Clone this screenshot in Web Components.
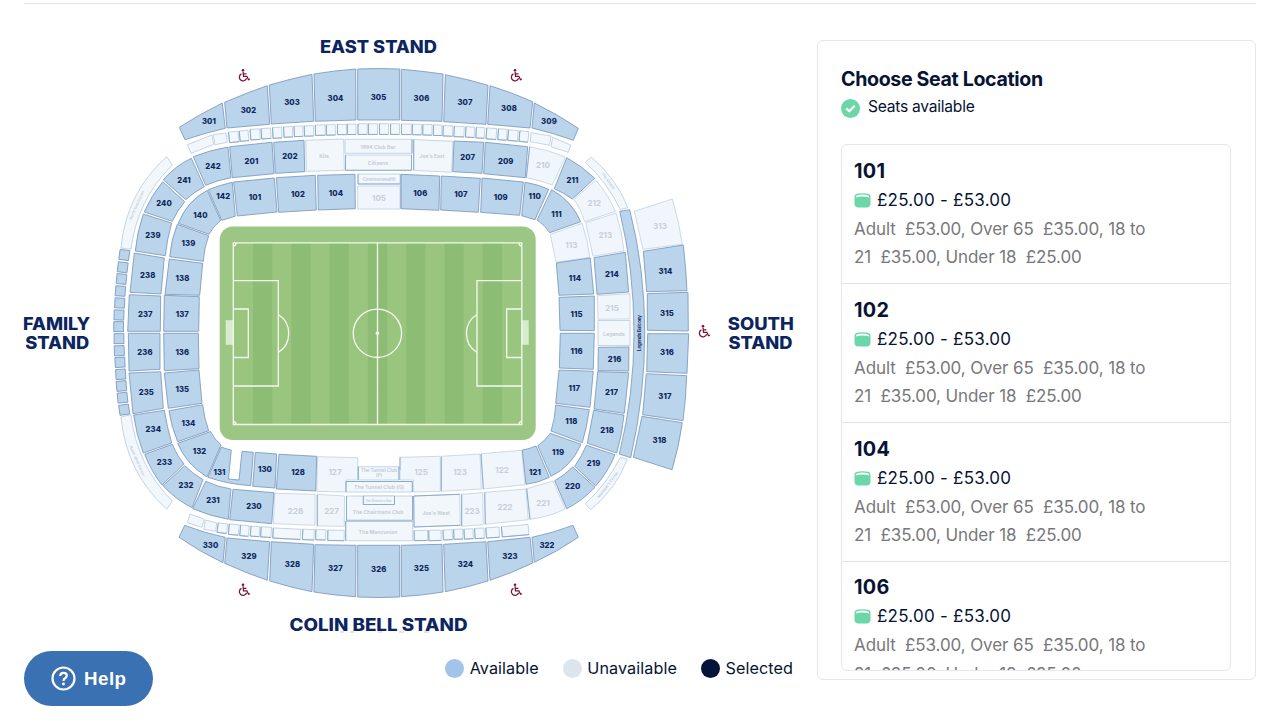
<!DOCTYPE html>
<html lang="en">
<head>
<meta charset="utf-8">
<title>Choose Seat Location</title>
<style>
  body {
    margin: 0;
    background: #fff;
    font-family: Inter, 'Liberation Sans', sans-serif;
    color: #061333;
    overflow: hidden;
  }
</style>
</head>
<body>
<seat-page>
  <stadium-map slot="map"></stadium-map>
  <map-legend slot="map"></map-legend>
  <seat-panel slot="panel" heading="Choose Seat Location" status="Seats available">
    <seat-item block="101"></seat-item>
    <seat-item block="102"></seat-item>
    <seat-item block="104"></seat-item>
    <seat-item block="106"></seat-item>
  </seat-panel>
</seat-page>
<help-button>Help</help-button>

<script>
// label, label x, label y, outline
const AVAILABLE = [
  // level 3, east
  ['301', 209, 121, '179.3 127.3Q200 114 222.3 103L225.3 128.3Q205 133 185 139.7'],
  ['302', 248.5, 110, '224.7 102.3Q246 93 267.3 85.7L269.7 124.3L227 128'],
  ['303', 292, 102, '269.3 85Q290 79 312 74.3L313.7 121.3L271.3 124'],
  ['304', 335.5, 98.7, '314 74Q335 70.5 355.7 69L356 120L315.3 121.3'],
  ['305', 378.5, 97, '357.7 69Q378.5 68 399.7 69L399.7 120L357.7 120'],
  ['306', 421.5, 98.7, '401.3 69.3Q422 71 443 74L442 121.3L401.3 120.3'],
  ['307', 465, 102.3, '445.3 74.7Q467 79 488 85.3L486 124.3L443.7 121.7'],
  ['308', 509, 108.7, '490 85.7Q512 92.5 532.7 101.7L530 128L487.7 124.3'],
  ['309', 549, 121, '534.3 103Q557 114 578.3 128.3L573.3 140.3Q553 133 532 128'],
  // level 3, colin bell
  ['330', 210.5, 545.3, '184.7 525.3Q204 533 225.3 537.3L223 562.7Q200 552 179 537.3'],
  ['329', 249, 556.7, '227 538L269.7 541.7L267.3 580.3Q246 573 224.7 563.3'],
  ['328', 292.5, 564.3, '271.3 541.7L313.7 544.3L312 591.7Q291 587.5 269.7 581'],
  ['327', 335.5, 568.5, '315 544.7L356 545.3L355.7 596.7Q335 595.5 314 592'],
  ['326', 378.7, 569.5, '357.7 545.3L399.7 545.3L399.7 597Q378.5 598 357.7 597'],
  ['325', 421.5, 568.5, '401.3 545.3L442 544.3L443 592Q422 595.5 401.3 596.7'],
  ['324', 465.5, 564.3, '443.7 544.3L486 541.7L488 581Q467 587.5 445.3 591.7'],
  ['323', 510, 556.7, '487.7 541.7L530 537.3L532.7 563Q512 573 490 580.3'],
  ['322', 547, 545, '532 537.3Q553 533 573 525.3L578.3 537.3Q557 552 534.3 562.3'],
  // level 3, south
  ['314', 665.5, 271, '643.3 251.3L683.3 245Q686 268 687 290.7L646.7 291.7'],
  ['315', 667, 313, '647.3 293.7L688 292.3L688.3 331L647.3 330.3'],
  ['316', 667, 352.7, '647.7 333.7L688.7 333.7L687 373.3L646.7 371.7'],
  ['317', 665, 396, '646.3 373.7L686.7 375.7Q686 398 683 420.7L642.7 414.7'],
  ['318', 659.5, 440.7, '642 416.3L682.3 422.7Q679 447 672 469.7L633.3 457.3'],
  // level 2
  ['242', 213, 166.3, '193.3 156.7Q210 150 228 147L231 177.7Q218 180 205.7 185.3'],
  ['201', 251.5, 161, '229.7 146.7L272 142.3L274 173.7L232.3 177.7'],
  ['202', 290, 156.7, '273.7 142.3L304 140.3L304.7 171.7L275.3 173.3'],
  ['207', 467.7, 157.3, '454 141L483.7 142.3L482 173.3L452.7 171.7'],
  ['209', 505.7, 161, '485.3 142.3L527.7 146.7L525.3 177.7L483.7 173.7'],
  ['211', 572.5, 180, '566.7 157.7Q582 166 594.7 178.3L572.3 199Q564 193 554.3 188.7'],
  ['214', 612, 274.3, '594 257.7L625.3 252.3L628.7 292L597 294.3'],
  ['216', 614.5, 359, '598.3 347.3L629 347L628.7 371L598 370.7'],
  ['217', 611.5, 392.3, '597.7 371.7L628.7 372.7L624.3 413.3L594 409'],
  ['218', 607, 430.5, '593.7 410.3L624 415Q622 435 616.7 453L587.3 443.3'],
  ['219', 593.5, 463.5, '586.3 445.3L615 454.7Q608 472 595.7 486L574.7 466.3Q582 456 586.3 445.3'],
  ['220', 572.7, 486, '572.7 467L595 487.3Q582 501 566.7 508.7L554.7 480.7Q565 475 572.7 467'],
  ['230', 254, 506.5, '233 489.3L274 492.7L271.7 523.7L229.7 519.7'],
  ['231', 213, 500, '205.7 481.3Q218 487 231 489L228.3 519.3Q210 516 192.7 508.7'],
  ['232', 186, 485.5, '184.7 465.7Q193 474 203 479.7L192 507.7Q175 499 163 485.7'],
  ['233', 164.5, 462, '144.7 454.3L172.3 444.3Q177 456 184 464L162 485Q151 471 144.7 454.3'],
  ['234', 153.3, 429.7, '133.7 415L164.3 410.3Q167 427 171.7 443L143.3 453Q136 434 133.7 415'],
  ['235', 146.3, 392.3, '129 373L160.7 371.7L163.3 408.3L133 413.7'],
  ['236', 145, 352.7, '128.3 333.3L160 333.3L160 369.3L129 371'],
  ['237', 145.3, 314.7, '129.3 294.7L160.7 296L160.3 331.3L127.7 331.3'],
  ['238', 147.7, 275.3, '134.3 253L164.3 258L161 294L130 292.3'],
  ['239', 153, 235.7, '143.3 214L171.7 223Q167 239 165.3 255.7L135.3 251Q137 232 143.3 214'],
  ['240', 164, 203, '162.7 181.7L184.7 201.7Q177 211 172.3 221.3L144.3 212Q151 196 162.7 181.7'],
  ['241', 184, 180, '191.3 158.3L204.3 186.7Q194 192 185.7 199.7L163.3 179.7Q175 166 191.3 158.3'],
  // level 1
  ['101', 255, 197, '233.7 182L274.3 178L277 212L237.3 216'],
  ['102', 298, 194.5, '276.3 177.7L315.3 175.3L316.3 210L278.7 212.3'],
  ['104', 336, 193.7, '317.7 175.3L355 174.3L355.3 208.7L318.3 210'],
  ['106', 420.3, 193.7, '401 174.3L439.7 176L439 210.3L401 208.7'],
  ['107', 461, 194.3, '441.3 176L480.3 178.3L478.3 212.3L440.7 210'],
  ['109', 500.7, 197.3, '482 178L523.3 182L519.7 215.3L480.7 212.3'],
  ['110', 534.7, 196, '525 182.3Q537 184 548.7 189.3L535 219.7L521.7 215.7'],
  ['111', 556.5, 214.5, '551.7 189.7Q572 201 580.7 221.7L549.7 232.7Q545 225 537 220'],
  ['114', 575, 278.7, '556.3 263L590.3 258L593.7 294L559 295.3'],
  ['115', 576.5, 314.7, '559 297.3L594.3 296L594.3 330.7L560 330.3'],
  ['116', 576.5, 351.3, '560.3 333.3L594.3 333.3L593.3 369.3L559.3 368'],
  ['117', 574.3, 388.3, '559 370L593.3 371.3L590 407.3L555.7 403.3'],
  ['118', 571.3, 421.5, '555.7 405L589.3 409.7Q587 427 582.3 442.7L551 431Q555 419 555.7 405'],
  ['119', 558, 452.7, '550.3 433.3L581 444.3Q571 467 551 476.3L537.7 445.7Q545 441 550.3 433.3'],
  ['121', 535, 472, '522.3 450Q529 449 536 446L549.3 477.3Q538 483 526 484.3'],
  ['128', 298, 472, '279 454.3L316.7 456.3L315.7 491L276.3 489'],
  ['130', 265, 469.7, '255.3 452.3L276.7 454L275 488L252.7 486.3'],
  ['131', 219.5, 472, '221.3 447Q226 449 231.3 450L228.5 479L239 480L242 451.3L253.3 452.3L250.7 485.7Q227 484 208 477.3'],
  ['132', 199.5, 451, '177.7 443.3L210.5 431.5Q215 440 221 445L207 477Q186 464 177.7 443.3'],
  ['134', 188.5, 423.3, '169 410.7L202.7 404.7Q204 418 208.7 430.7L177.7 441.7Q171 426 169 410.7'],
  ['135', 182.3, 389.7, '164.3 373L199 370L202 403.3L168.3 408.3'],
  ['136', 182.3, 352.7, '163.7 333.3L198.3 333.3L199 368.7L164.3 370.7'],
  ['137', 182.3, 314.7, '164.3 295.3L199.3 296.7L198.7 331.3L163.7 331.3'],
  ['138', 182.5, 278.7, '169.3 259L202.7 263.3L199.7 295.3L165 294.3'],
  ['139', 188.5, 243.7, '177.3 224.3L208.7 235.7Q204 248 203.3 261.3L169.7 256.7Q171 240 177.3 224.3'],
  ['140', 200.5, 215.5, '207.3 190.3L220.7 220.7Q213 226 209 234.3L178.3 223.3Q187 201 207.3 190.3'],
  ['142', 223.3, 196, '208.3 189.7Q220 185 232.3 182.3L235.3 216.3L221.7 220.3'],
  // legends balcony
  ['', 0, 0, '619.7 211.3L629.7 209.7Q645 270 644.7 333Q645 395 630.7 457.7L619.3 454Q634 395 634 333Q634 270 619.7 211.3'],
];

const UNAVAILABLE = [
  ['210', 543, 165, '529.7 146.7Q549 150 565.3 157L552.3 185Q539 180 526.3 177.7'],
  ['212', 594.3, 202.7, '595.7 180Q608 194 615.3 211.3L584.7 221.7Q581 209 574 199.3'],
  ['213', 605.3, 235.3, '585.7 222.7L616 213Q622 231 624 251L593 256.3'],
  ['215', 612, 308.3, '597.3 295.7L630 293.7L630 319L598 319.3'],
  ['221', 543, 502.5, '526.7 488.7L553 481L565.3 509Q549 517 530 519.3'],
  ['222', 505, 506.5, '484.7 492.3L526 489L528.3 519.7L485.3 524.3'],
  ['223', 472, 511, '461.7 494.3L482.7 492.7L483.3 524.7L461.7 526.3'],
  ['227', 331.5, 511, '317 494.3L344.5 496L344.3 526.3L317 526'],
  ['228', 295.5, 511, '274.7 493.3L315 494.3L315 525.3L273.3 523.7'],
  ['313', 660, 226.3, '634.3 211.3L672.3 199Q679 221 682.3 244.3L643 249.3'],
  ['105', 379, 197.5, '357.7 186L400 186L400 209L357.7 209'],
  ['113', 571.3, 244.5, '550.3 234.3L582 223.3Q588 240 589.7 257.3L556 262.3'],
  ['122', 502, 469.7, '481 453.7L521.7 450.3L525 484.7L483.3 489'],
  ['123', 460, 472, '441.3 456.3L480 454L481.3 489L441.3 491.3'],
  ['125', 421, 472, '400 457.3L440.3 456.3L440.3 491.3L413.5 492L413.5 480L400 480'],
  ['127', 335, 472, '317.7 456.7L357.7 457.7L357.7 480L346 480L346 492L316.7 491.3'],
];

// lounges and bars: label, label x, label y, font size, outline
const LOUNGES = [
  ['Kits', 324, 156, 5.2, '305.7 140.3L343.7 139L344.3 170.3L306.3 171.3'],
  ['1894 Club Bar', 378, 146.7, 5.2, '345 139.3L412 139.3L412 153.3L345 153.3'],
  ['Citizens', 378, 162.7, 5.2, '345.5 155L411.5 155L411.5 170.3L345.5 170.3'],
  ["Joe's East", 432, 156, 5, '413.7 139.5L453 141.3L451.7 172.3L413.7 170.3'],
  ['Commonwealth', 379, 179.7, 4.3, '358 174L400 174L400 184L358 184'],
  ['Legends', 614, 333.7, 5.2, '598 320.5L630 320.5L630 345.5L598 345.5'],
  ["Joe's West", 436, 513.3, 5.2, '413.7 496L459.7 494.3L460.3 525.3L414 527'],
  ['The Tunnel Club (G)', 379, 486.7, 5.2, '346 481.5L412.3 481.5L412.3 492L346 492'],
  ['The Chairmans Club', 378, 512, 5.2, '346.5 496L412.5 496L412.5 520L346.5 520'],
  ['The Directors Box', 378.5, 500.5, 3.1, '363.3 496L394.5 496L394.5 504.5L363.3 504.5'],
  ['The Mancunian', 378, 531.7, 5.2, '345.7 521L412.7 521L412.7 540.7L345.7 540.7'],
  ['', 0, 0, 5, '358.3 466.7L399 466.7L399 480L358.3 480'],
];

// darker edges on the lounge and block outlines
const SHADES = 'M345.5 155V170.3H411.5V155M412 139.3V153.3M358 174V184H400M345.8 521H412.7M345.7 521V540.7' +
  'M346 492V481.5H412.3V492M358.3 480V466.7M399 466.7V480M400 457.3V470M363.3 496V504.5H394.5V496' +
  'M346.5 520V496M412.5 496V520M413.7 496L414 527L460.3 525.3M413.7 496L459.7 494.3M317.3 495V526' +
  'M413.7 139.5V170.3M441.3 457V491M481 454L483.3 489M484.7 492.3L485.3 524.3M461.7 494.3V526' +
  'M526.7 488.7L530 519.3M529.7 146.7L526.3 177.7M401 174.3V208.7';

// outer corner strips
const CORNERS = [
  '166.7 156.7L172.3 165Q137 200 131 249.3L121 248Q126 193 166.7 156.7',
  '166.7 509.3L172.3 501Q137 466 131 414.7L121 417Q126 472 166.7 509.3',
  '585.3 162.3L591.3 157Q616 178 628 207.7L620.3 209.5Q607 182 585.3 162.3',
  '585.3 503.7L590.7 509.7Q616 489 627.3 459.3L620.3 457.3Q607 484 585.3 503.7',
];

// boxes: x, y, width, height, rotation
const EAST_BOXES = [
  [229, 131.6, 9.6, 10.6, -6], [239.7, 130.6, 8.8, 10.4, -5], [250.4, 129.1, 9.6, 10.6, -4],
  [261.4, 128.3, 9.4, 10.4, -4], [272.8, 127.3, 9, 10.8, -3], [283.8, 126.7, 8.8, 10.4, -3],
  [294.2, 126.1, 8.8, 10.4, -2], [304.4, 125.7, 9.2, 10.4, -2], [315.4, 124.9, 9.8, 10.4, -1],
  [326.4, 124.7, 9, 10.4, -1], [337.4, 124.3, 9, 10.4, 0], [347.4, 124.1, 8.6, 10.4, 0],
  [358, 123.8, 9.2, 10.6, 0], [368.4, 123.8, 9.2, 10.6, 0], [379.4, 123.8, 9, 10.6, 0],
  [390.6, 123.8, 8.8, 10.6, 0], [401.4, 124, 9.8, 10.6, 0], [412.4, 124.2, 9, 10.6, 1],
  [422.8, 124.5, 9.2, 10.6, 1], [433.4, 124.9, 8.4, 10.6, 1], [443.1, 125.7, 9.6, 10.4, 2],
  [454.1, 126.4, 10, 10.4, 2], [465.7, 126.9, 8.8, 10.4, 3], [476.1, 127.5, 8.4, 10.6, 3],
  [486.4, 128.2, 10, 11, 4], [498.1, 129, 8.8, 11, 4], [508.1, 130.2, 9.8, 10.6, 5],
  [519.4, 131.2, 9, 10.6, 6],
];
const WEST_BOXES = [
  [217.6, 523.4, 9.6, 9.6, 7], [228.8, 524.4, 10, 10.4, 5], [240.2, 525.4, 8.6, 10.6, 5],
  [250.6, 526.4, 9, 10, 4], [260.9, 527, 10.4, 10.2, 3], [273, 528.6, 27.6, 10.2, 3],
  [302.6, 529.4, 11.6, 10.4, 2], [315.8, 529.7, 10, 10.2, 1], [327.8, 530.2, 16.4, 10.4, 1],
  [414.2, 530.4, 13.4, 10.2, -1], [428.8, 530.2, 12.4, 10.4, -1], [443.2, 529.9, 9.2, 9.9, -2],
  [453.8, 529.2, 9, 10, -2], [464.2, 528.9, 9, 10, -3], [474.8, 528.2, 9.4, 10.2, -3],
  [486.1, 527.4, 13.2, 10.2, -4], [501.8, 525.6, 26.8, 10.2, -5],
];
const EDGE_BOXES = [
  '187.3 144.7L212 135L213.7 144.3L191.3 153.3',
  '213.3 134.7L226 133L227.3 142.3L215 144.7',
  '531 132.7L551 136L549.7 145.3L530.3 141.7',
  '552.7 137.3L570.7 145L568.3 152.3L551 146.7',
  '190 514L204.3 519.3L202 527.3L187.3 522.7',
  '205.3 520L216.7 522.7L215.7 531.3L204 529.3',
];
// family stand boxes: centre x, centre y, rotation
const FAMILY_BOXES = [
  [124.3, 255, 8], [122.7, 267.3, 7], [121.5, 279, 5], [120.4, 291, 4], [119.7, 303, 3],
  [119, 315, 2], [118.7, 326.7, 0], [119, 338.7, 0], [119.3, 350.7, -2], [120, 362.3, -3],
  [120.7, 374.3, -4], [121.4, 386, -5], [122.5, 397.7, -6], [124.2, 409.7, -8],
];

const WHEELCHAIRS = [[244, 75], [516, 75], [704, 331], [244, 589.5], [516, 589.5]];

const outline = (points, cls) => `<path class="${cls}" d="M${points}Z"/>`;
const box = ([x, y, w, h, r]) =>
  `<g transform="rotate(${r} ${x + w / 2} ${y + h / 2})"><rect class="box" x="${x}" y="${y}" width="${w}" height="${h}"/><path class="shade" d="M${x} ${y}v${h}h${w}"/></g>`;
const label = (text, x, y, cls, extra = '') => text ? `<text class="${cls}" x="${x}" y="${y}" ${extra}>${text}</text>` : '';

class SeatPage extends HTMLElement {
  constructor() {
    super();
    this.attachShadow({ mode: 'open' });
    this.shadowRoot.innerHTML = `
      <style>
        :host {
          display: block;
          padding: 3px 24px 0 0;
        }
        .rule {
          height: 1px;
          margin-left: 24px;
          background: #e4e5e7;
        }
        .columns {
          display: grid;
          grid-template-columns: 817px 1fr;
          align-items: start;
        }
        .left {
          display: flex;
          flex-direction: column;
        }
      </style>
      <div class="rule"></div>
      <div class="columns">
        <div class="left"><slot name="map"></slot></div>
        <slot name="panel"></slot>
      </div>
    `;
  }
}

class StadiumMap extends HTMLElement {
  constructor() {
    super();
    this.attachShadow({ mode: 'open' });
    this.shadowRoot.innerHTML = `
      <style>
        :host {
          display: block;
          width: 800px;
          height: 640px;
        }
        svg {
          display: block;
        }
        text {
          text-anchor: middle;
          dominant-baseline: central;
        }
        .on {
          fill: #bad4ec;
          stroke: #7593b8;
          stroke-width: 0.8;
        }
        .off {
          fill: #f0f6fb;
          stroke: #b9cce0;
          stroke-width: 0.7;
        }
        .box {
          fill: #f2f7fc;
          stroke: #adc4dc;
          stroke-width: 0.7;
        }
        .shade {
          fill: none;
          stroke: #86a6c9;
          stroke-width: 0.9;
        }
        .num {
          font-size: 7.7px;
          font-weight: 800;
          letter-spacing: 0.1px;
          fill: #0d2659;
        }
        .num-off {
          font-size: 8px;
          font-weight: 700;
          fill: #c8ced9;
        }
        .lounge {
          font-weight: 600;
          fill: #c2c8d4;
        }
        .stand {
          font-size: 16.9px;
          font-weight: 800;
          fill: #0c2560;
        }
        .line {
          fill: none;
          stroke: #f4faee;
          stroke-width: 1.3;
        }
        .chair {
          fill: none;
          stroke: #7b1235;
          stroke-width: 1.25;
        }
      </style>
      <svg width="800" height="640" viewBox="0 4 800 640">
        ${CORNERS.map((c) => outline(c, 'box')).join('')}
        ${EDGE_BOXES.map((c) => outline(c, 'box')).join('')}
        ${EAST_BOXES.map(box).join('')}
        ${WEST_BOXES.map(box).join('')}
        ${FAMILY_BOXES.map(([x, y, r]) => `<rect class="on" x="${x - 4.9}" y="${y - 5}" width="9.8" height="10" transform="rotate(${r} ${x} ${y})"/>`).join('')}
        ${UNAVAILABLE.map(([t, x, y, d]) => outline(d, 'off') + label(t, x, y, 'num-off')).join('')}
        ${LOUNGES.map(([t, x, y, s, d]) => outline(d, 'box') + label(t, x, y, 'lounge', `font-size="${s}"`)).join('')}
        ${label('The Tunnel Club', 379, 470.6, 'lounge', 'font-size="4.6"')}
        ${label('(P)', 379, 475.6, 'lounge', 'font-size="4.6"')}
        <path class="shade" d="${SHADES}"/>
        ${AVAILABLE.map(([t, x, y, d]) => outline(d, 'on') + label(t, x, y, 'num')).join('')}
        <text font-size="4.3" font-weight="700" fill="#0d2659" transform="translate(639.7 333) rotate(-90)">Legends Balcony</text>
        <text class="lounge" font-size="3.6" transform="translate(137 205) rotate(-66)">North East Corner</text>
        <text class="lounge" font-size="3.6" transform="translate(137 461) rotate(66)">North West Corner</text>
        <text class="lounge" font-size="3.6" transform="translate(608 181) rotate(53)">The Airlock</text>
        <text class="lounge" font-size="3.6" transform="translate(608 485) rotate(-53)">Manager's Corner</text>

        <rect x="219.7" y="226.5" width="316" height="213.5" rx="13" fill="#9cc684"/>
        <rect x="233" y="242.7" width="289" height="182" fill="#99c57f"/>
        ${[0, 1, 2, 3, 4, 5, 6].map((i) => `<rect x="${253 + i * 38.3}" y="242.7" width="19.2" height="182" fill="#8dbd75"/>`).join('')}
        <path d="M225.7 320.3h7.3v24.4h-7.3zM522 320.3h6.7v24.4H522z" fill="#d9ebcf"/>
        <path class="line" d="M233.3 242.8H521.8V424.5H233.3ZM377.5 243V424.5M233.3 280.7H278.3V386H233.3M233.3 309H248.3V357.5H233.3M278.3 314.5Q288.7 321 288.7 333.5Q288.7 346 278.3 352.5M521.8 280.7H477V386H521.8M521.8 309H506.7V357.5H521.8M477 314.5Q466.5 321 466.5 333.5Q466.5 346 477 352.5M233.3 246Q236 246 236 243M521.8 246Q519 246 519 243M233.3 421.5Q236 421.5 236 424.5M521.8 421.5Q519 421.5 519 424.5"/>
        <circle class="line" cx="377.4" cy="333.3" r="24.2"/>
        <circle cx="377.4" cy="333.3" r="1.8" fill="#f4faee"/>

        ${WHEELCHAIRS.map(([x, y]) => `
          <g class="chair" transform="translate(${x} ${y})">
            <circle cx="-1" cy="-4.7" r="1.3" fill="#7b1235" stroke="none"/>
            <path d="M-0.9 -3.2L-0.5 1.3H2.9L4.5 4.7L5.8 4.2M-0.7 -1.2H2.4"/>
            <path d="M-2.6 -1.1A3.7 3.7 0 1 0 2.6 3.3"/>
          </g>`).join('')}

        <text class="stand" x="378.5" y="46.6" textLength="117" lengthAdjust="spacingAndGlyphs">EAST STAND</text>
        <text class="stand" x="378.5" y="625.2" textLength="178" lengthAdjust="spacingAndGlyphs">COLIN BELL STAND</text>
        <text class="stand" x="56.5" y="323.8" textLength="67" lengthAdjust="spacingAndGlyphs">FAMILY</text>
        <text class="stand" x="57.2" y="342.8" textLength="64" lengthAdjust="spacingAndGlyphs">STAND</text>
        <text class="stand" x="760.8" y="323.8" textLength="66" lengthAdjust="spacingAndGlyphs">SOUTH</text>
        <text class="stand" x="760.5" y="342.8" textLength="64" lengthAdjust="spacingAndGlyphs">STAND</text>
        <path d="M340 632h4M350 632h4M378 632h4M399 632h5M424 632h5" stroke="#b4b9c6" stroke-width="0.8"/>
      </svg>
    `;
  }
}

class MapLegend extends HTMLElement {
  constructor() {
    super();
    this.attachShadow({ mode: 'open' });
    this.shadowRoot.innerHTML = `
      <style>
        :host {
          display: flex;
          justify-content: flex-end;
          gap: 24px;
          box-sizing: border-box;
          width: 793px;
          padding-top: 10px;
          font-size: 16.2px;
          line-height: 28px;
          letter-spacing: 0.08px;
        }
        span {
          display: flex;
          align-items: center;
          gap: 5.5px;
        }
        i {
          width: 19px;
          height: 19px;
          border-radius: 50%;
        }
      </style>
      <span><i style="background: #a1c4e8"></i>Available</span>
      <span><i style="background: #dde5ec"></i>Unavailable</span>
      <span><i style="background: #041337"></i>Selected</span>
    `;
  }
}

class SeatPanel extends HTMLElement {
  constructor() {
    super();
    this.attachShadow({ mode: 'open' });
    this.shadowRoot.innerHTML = `
      <style>
        :host {
          display: block;
          box-sizing: border-box;
          height: 640px;
          margin-top: 36px;
          padding: 24px 24px 0 23px;
          border: 1px solid #e6e7e9;
          border-radius: 6px;
        }
        h2 {
          margin: 0;
          font-size: 19.6px;
          line-height: 28px;
          font-weight: 700;
          letter-spacing: -0.35px;
        }
        .status {
          display: flex;
          align-items: center;
          gap: 8px;
          font-size: 15.6px;
          line-height: 28px;
          letter-spacing: -0.25px;
        }
        .status svg {
          margin-top: 3px;
        }
        .list {
          box-sizing: border-box;
          height: 527px;
          margin-top: 23px;
          padding-top: 0.6px;
          overflow: hidden;
          border: 1px solid #e6e7e9;
          border-radius: 6px;
        }
      </style>
      <h2>${this.getAttribute('heading')}</h2>
      <div class="status">
        <svg width="19" height="19" viewBox="0 0 19 19">
          <circle cx="9.5" cy="9.5" r="9.5" fill="#6bd6a7"/>
          <path d="M5.2 9.4L8.3 12.3L13.7 6.8" fill="none" stroke="#fff" stroke-width="2.2"/>
        </svg>
        <span>${this.getAttribute('status')}</span>
      </div>
      <div class="list"><slot></slot></div>
    `;
  }
}

class SeatItem extends HTMLElement {
  constructor() {
    super();
    this.attachShadow({ mode: 'open' });
    this.shadowRoot.innerHTML = `
      <style>
        :host {
          display: block;
          box-sizing: border-box;
          height: 138.8px;
          padding: 11.4px 60px 0 12px;
          border-bottom: 1px solid #e2e3e5;
          font-size: 17px;
          line-height: 28.4px;
        }
        .name {
          font-size: 19.8px;
          line-height: 29px;
          font-weight: 700;
          letter-spacing: 0.3px;
        }
        .price {
          display: flex;
          align-items: center;
          gap: 6px;
          line-height: 29px;
          letter-spacing: 0.24px;
        }
        .info {
          color: #77787b;
          letter-spacing: -0.1px;
          white-space: nowrap;
        }
      </style>
      <div class="name">${this.getAttribute('block')}</div>
      <div class="price">
        <svg width="17" height="15" viewBox="0 0 17 15">
          <path d="M0.5 3.5Q0.5 1.2 3 0.8Q8.5 -0.2 14 0.8Q16.5 1.2 16.5 3.5V10.5Q16.5 14.5 12.5 14.5H4.5Q0.5 14.5 0.5 10.5Z" fill="#6bd6a7"/>
          <path d="M1.6 4.4Q2 2.2 4 1.9Q8.5 1.2 13 1.9Q15 2.2 15.4 4.4Q8.5 2.6 1.6 4.4Z" fill="#fff"/>
        </svg>
        <span>£25.00 - £53.00</span>
      </div>
      <div class="info">Adult&nbsp; £53.00, Over 65&nbsp; £35.00, 18 to<br>21&nbsp; £35.00, Under 18&nbsp; £25.00</div>
    `;
  }
}

class HelpButton extends HTMLElement {
  constructor() {
    super();
    this.attachShadow({ mode: 'open' });
    this.shadowRoot.innerHTML = `
      <style>
        :host {
          position: fixed;
          left: 24px;
          top: 651px;
          display: flex;
          align-items: center;
          justify-content: center;
          gap: 8.5px;
          box-sizing: border-box;
          width: 129px;
          height: 55px;
          border-radius: 28px;
          background: #3a71b2;
          color: #fff;
          font: bold 18.7px 'Liberation Sans', sans-serif;
          letter-spacing: 0.5px;
        }
      </style>
      <svg width="25" height="25" viewBox="0 0 25 25" fill="none" stroke="#fff" stroke-width="2.2">
        <circle cx="12.5" cy="12.5" r="11"/>
        <path d="M9.2 10Q9.3 6.8 12.6 6.8Q15.8 6.8 15.8 9.6Q15.8 11.2 14 12.3Q12.5 13.2 12.5 15"/>
        <circle cx="12.5" cy="18" r="1.4" fill="#fff" stroke="none"/>
      </svg>
      <slot></slot>
    `;
  }
}

customElements.define('seat-page', SeatPage);
customElements.define('stadium-map', StadiumMap);
customElements.define('map-legend', MapLegend);
customElements.define('seat-panel', SeatPanel);
customElements.define('seat-item', SeatItem);
customElements.define('help-button', HelpButton);
</script>
</body>
</html>
